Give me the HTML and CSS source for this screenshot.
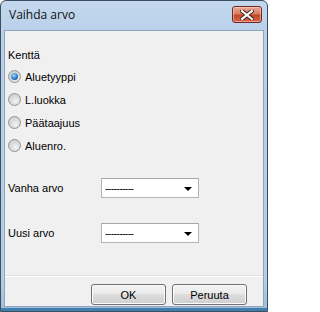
FILE: index.html
```html
<!DOCTYPE html>
<html>
<head>
<meta charset="utf-8">
<link rel="stylesheet" href="styles.css">
</head>
<body>
<div class="window">
  <div class="titlebar">
    <span class="title">Vaihda arvo</span>
    <span class="close">
      <svg width="14" height="10" viewBox="0 0 14 10"><path d="M2 1 L12 9 M12 1 L2 9" stroke="#3b1a12" stroke-width="4" stroke-linecap="square"/><path d="M2 1 L12 9 M12 1 L2 9" stroke="#ffffff" stroke-width="2.2" stroke-linecap="square"/></svg>
    </span>
  </div>
  <div class="client">
    <div class="content">
      <div class="heading">Kenttä</div>
      <div class="radios">
        <div class="radio-row"><span class="radio checked"></span><span>Aluetyyppi</span></div>
        <div class="radio-row"><span class="radio"></span><span>L.luokka</span></div>
        <div class="radio-row"><span class="radio"></span><span>Päätaajuus</span></div>
        <div class="radio-row"><span class="radio"></span><span>Aluenro.</span></div>
      </div>
      <div class="field first">
        <span class="label">Vanha arvo</span>
        <span class="combo"><span class="value">----------</span><span class="arrow"></span></span>
      </div>
      <div class="field second">
        <span class="label">Uusi arvo</span>
        <span class="combo"><span class="value">----------</span><span class="arrow"></span></span>
      </div>
    </div>
    <div class="footer">
      <button class="btn">OK</button>
      <button class="btn">Peruuta</button>
    </div>
  </div>
</div>
</body>
</html>
```
FILE: styles.css
```css
html, body {
  margin: 0;
  padding: 0;
  background: #ffffff;
}
.window {
  width: 268px;
  height: 312px;
  box-sizing: border-box;
  border: 1px solid #3c4e62;
  border-radius: 6px 6px 0 0;
  background: linear-gradient(#c3d8ee, #b7cfe8 40px, #b5cde7 280px, #9fbcd9);
  display: flex;
  flex-direction: column;
  padding: 0 3px 4px 3px;
  box-shadow: inset 0 -3px 0 #3f7fae;
  font-family: "Liberation Sans", Arial, sans-serif;
  font-size: 11px;
  color: #000;
}
.titlebar {
  height: 29px;
  display: flex;
  align-items: flex-start;
  padding-left: 5px;
  box-sizing: border-box;
}
.title {
  font-family: "Open Sans", "Noto Sans", sans-serif;
  font-size: 12px;
  line-height: 12px;
  margin-top: 8px;
  color: #111;
}
.close {
  margin-left: auto;
  margin-top: 5px;
  margin-right: 2px;
  width: 30px;
  height: 17px;
  box-sizing: border-box;
  border: 1px solid #6b2a1c;
  border-radius: 3px;
  background: linear-gradient(#e9a998, #d97c64 45%, #c4452a 55%, #d3684d);
  box-shadow: inset 0 0 0 1px rgba(255,220,210,0.5);
  display: flex;
  align-items: center;
  justify-content: center;
}
.close svg { display: block; }
.client {
  flex: 1;
  background: #f0f0f0;
  border: 1px solid #8fa4bd;
  display: flex;
  flex-direction: column;
}
.content {
  flex: 1;
  padding: 17px 0 0 3px;
}
.heading {
  line-height: 14px;
}
.radios {
  margin-top: 3px;
  display: flex;
  flex-direction: column;
}
.radio-row {
  height: 23px;
  display: flex;
  align-items: center;
  gap: 4px;
}
.radio {
  width: 13px;
  height: 13px;
  box-sizing: border-box;
  border-radius: 50%;
  border: 1px solid #929292;
  background: radial-gradient(circle at 60% 65%, #f4f4f4 0, #dcdcdc 45%, #c8c8c8 100%);
  position: relative;
}
.radio.checked::after {
  content: "";
  position: absolute;
  left: 2px;
  top: 2px;
  width: 7px;
  height: 7px;
  border-radius: 50%;
  background: radial-gradient(circle at 40% 35%, #9fd8ff 0, #2d7cc4 55%, #153f72 100%);
}
.field {
  display: flex;
  align-items: center;
  height: 20px;
}
.field.first { margin-top: 21px; }
.field.second { margin-top: 25px; }
.label {
  width: 93px;
}
.combo {
  width: 98px;
  height: 20px;
  box-sizing: border-box;
  border: 1px solid #b4b4b4;
  border-top-color: #a8a8a8;
  background: #ffffff;
  display: flex;
  align-items: center;
  padding: 0 6px 0 3px;
}
.value {
  flex: 1;
  letter-spacing: -0.5px;
  font-size: 10px;
}
.arrow {
  width: 0;
  height: 0;
  border-left: 4px solid transparent;
  border-right: 4px solid transparent;
  border-top: 4px solid #000;
  margin-top: 2px;
}
.footer {
  height: 31px;
  border-top: 1px solid #dfdfdf;
  box-shadow: inset 0 1px 0 #ffffff;
  display: flex;
  justify-content: flex-end;
  align-items: flex-start;
  gap: 6px;
  padding: 8px 16px 0 0;
  box-sizing: border-box;
}
.btn {
  width: 75px;
  height: 21px;
  box-sizing: border-box;
  border: 1px solid #707070;
  border-radius: 3px;
  background: linear-gradient(#f2f2f2, #ebebeb 45%, #dddddd 50%, #cfcfcf);
  box-shadow: inset 0 0 0 1px #fcfcfc;
  font-family: "Liberation Sans", Arial, sans-serif;
  font-size: 11px;
  color: #000;
  padding: 0;
}
```
